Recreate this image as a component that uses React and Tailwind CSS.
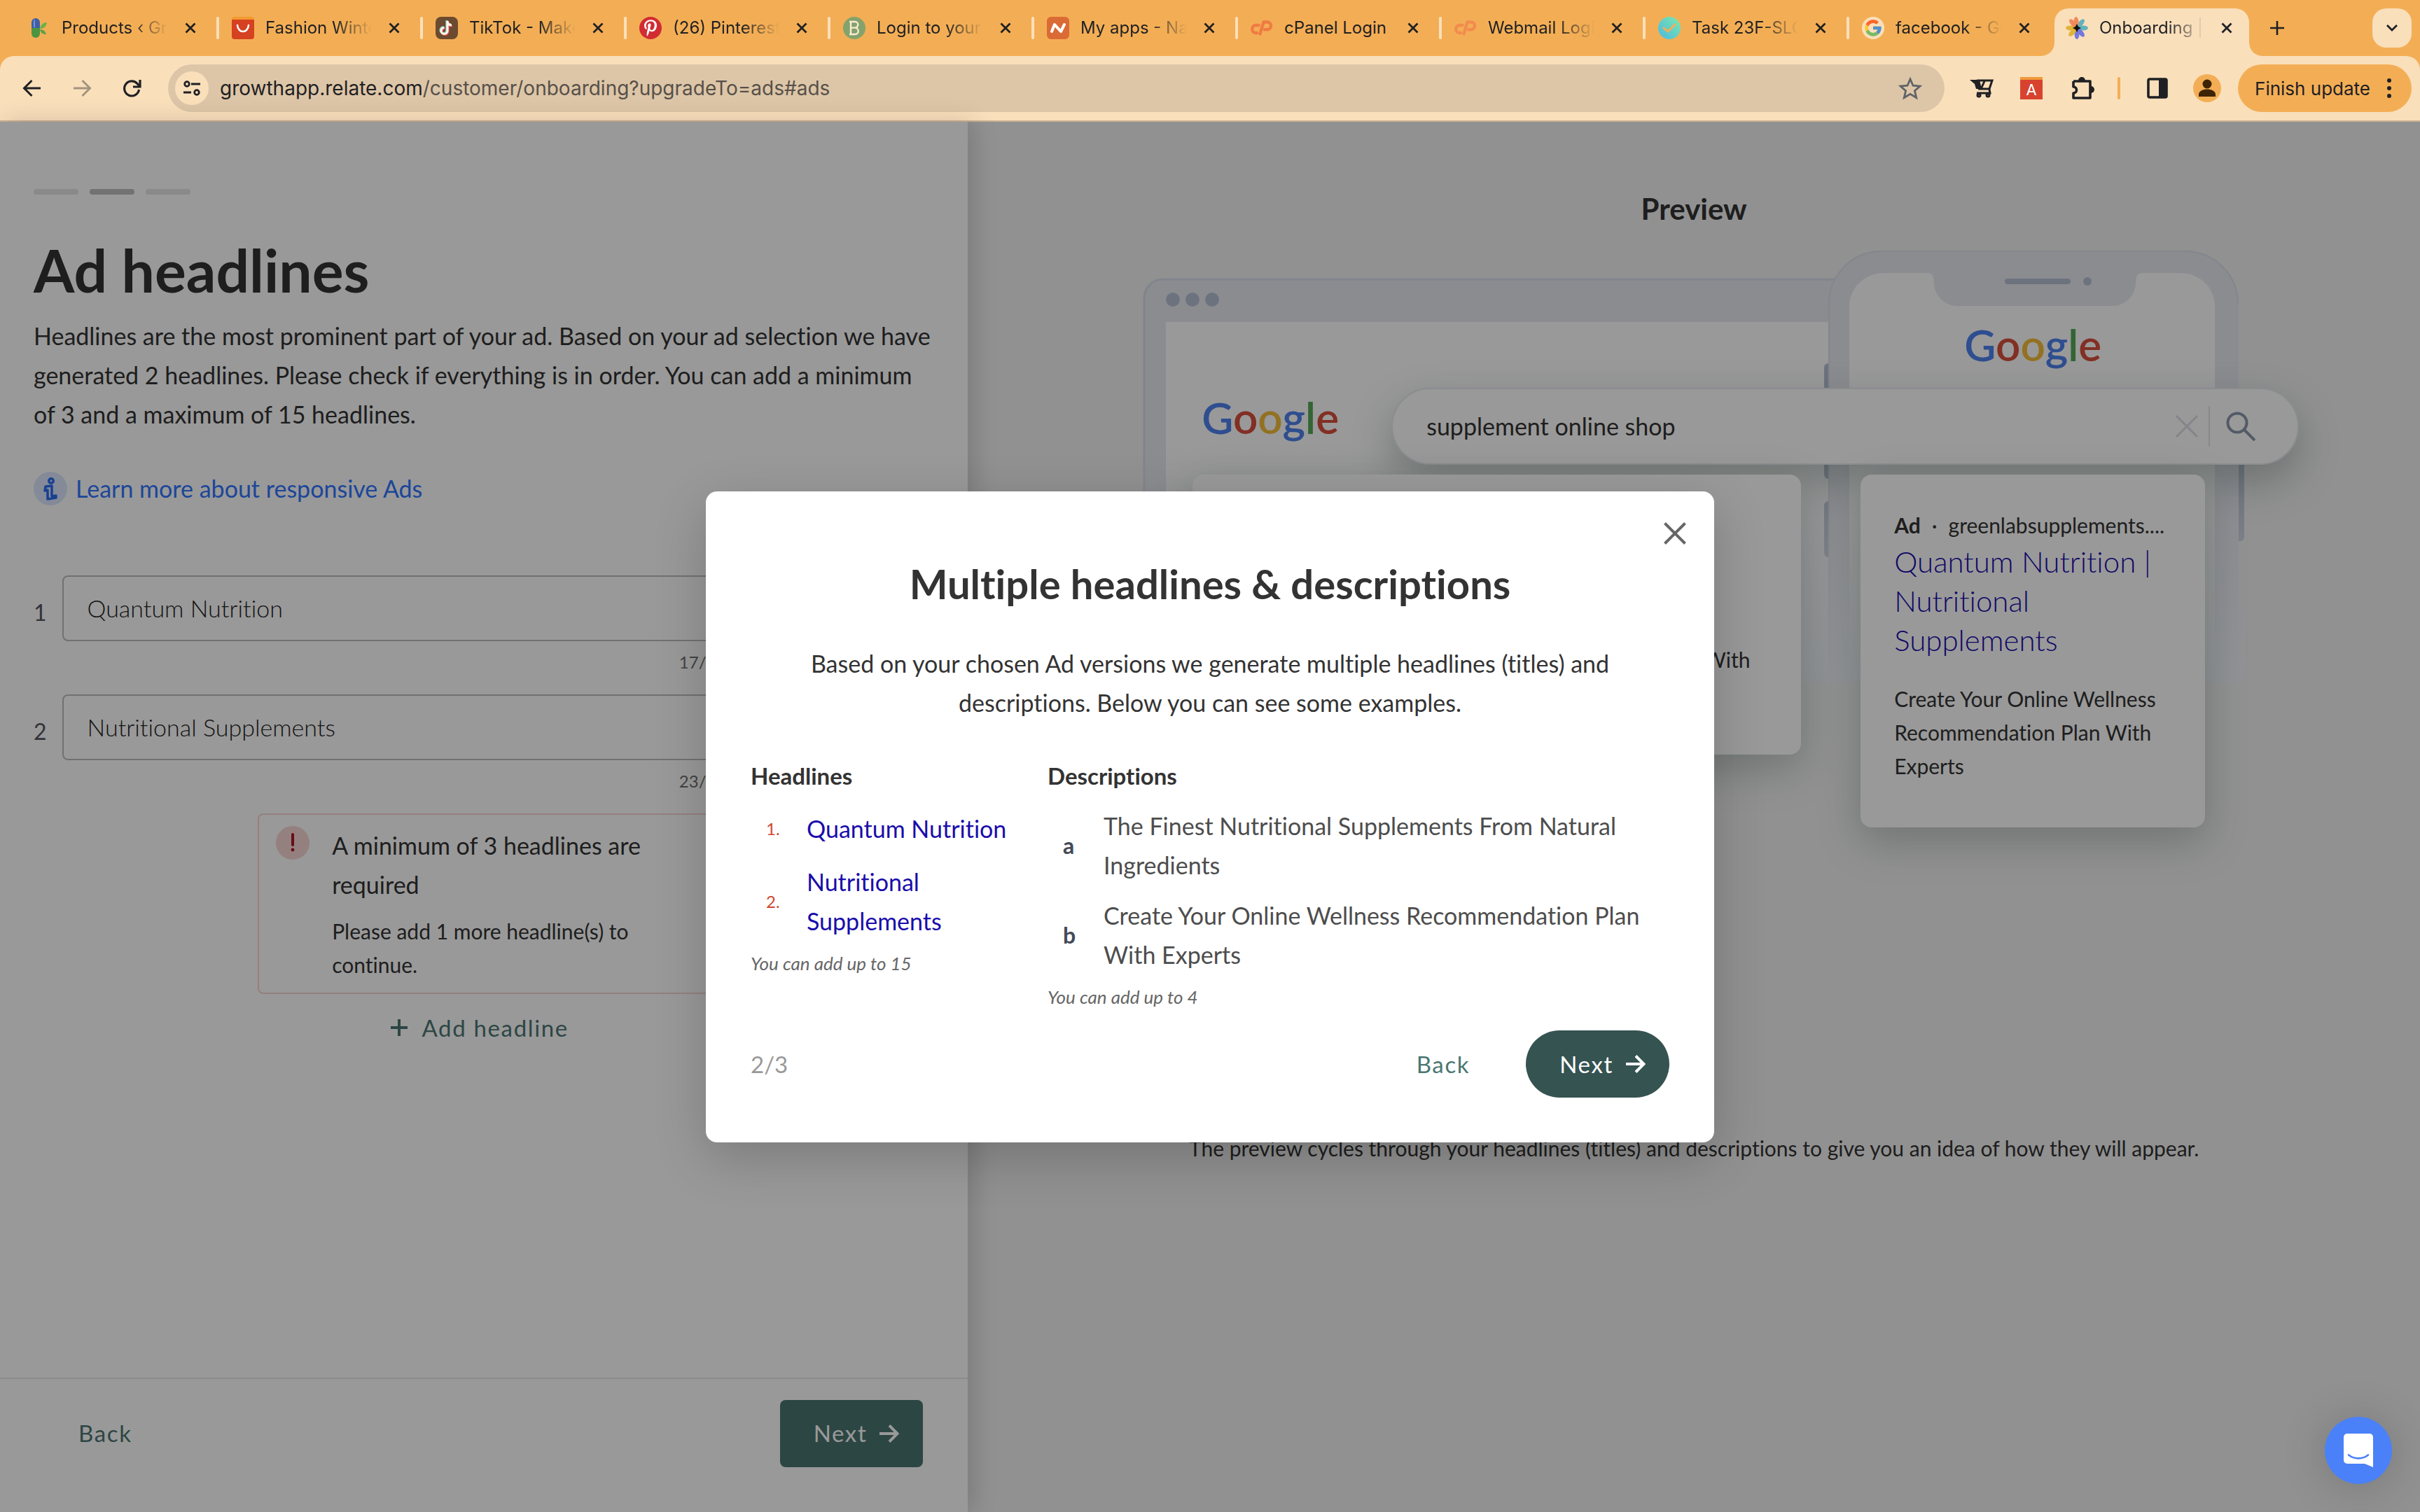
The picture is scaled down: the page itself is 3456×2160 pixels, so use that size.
import React from "react";
import { FcGoogle } from "react-icons/fc";
import { FaPinterestP } from "react-icons/fa";

const INK = "#1f2023";

function Products() {
  return (
    <svg viewBox="0 0 32 32" className="size-8">
      <path d="M5 8a6 6 0 0 1 12 0v8H5z" fill="#3d5fa8" />
      <path d="M5 16h12v8a6 6 0 0 1-12 0z" fill="#4b9440" />
      <path d="M8 7c0-2 1-3 2-3v11H8z" fill="#8fa9dc" opacity=".7" />
      <path d="M17 17c1-6 5-9 10-9-1 6-4 9-10 9z" fill="#6fb04a" />
      <path d="M17 18c5 0 8 3 9 7-5 0-8-2-9-7z" fill="#5aa04a" />
    </svg>
  );
}

function Ali() {
  return (
    <svg viewBox="0 0 32 32" className="size-8">
      <path d="M0 8V4a4 4 0 0 1 4-4h24a4 4 0 0 1 4 4v4z" fill="#f29a2e" />
      <path d="M0 4h32v24a4 4 0 0 1-4 4H4a4 4 0 0 1-4-4z" fill="#d64122" />
      <path d="M8 12c1 12 15 12 16 0" fill="none" stroke="#fff" strokeWidth="2.6" strokeLinecap="round" />
    </svg>
  );
}

function TikTok() {
  const note = "M17 6v14a4.5 4.5 0 1 1-4.5-4.5M17 6c0 4 3 6 6 6";
  return (
    <svg viewBox="0 0 32 32" className="size-8" fill="none" strokeWidth="3.2">
      <rect width="32" height="32" rx="8" fill="#6b4a2f" />
      <path d={note} stroke="#7fd6cd" transform="translate(-1 -1)" />
      <path d={note} stroke="#e8475b" transform="translate(1 1)" />
      <path d={note} stroke="#fff5e6" />
    </svg>
  );
}

function Pinterest() {
  return (
    <span className="grid size-8 place-items-center rounded-full bg-[#d22c33] text-white">
      <FaPinterestP className="size-6" />
    </span>
  );
}

function BLogo() {
  return (
    <svg viewBox="0 0 32 32" className="size-8" fill="none" stroke="#f9ecd2" strokeWidth="2.4" strokeLinejoin="round">
      <circle cx="16" cy="16" r="16" fill="#84a26c" stroke="none" />
      <path d="M11 7v18M9 7h8a4.3 4.3 0 0 1 0 8.6h-6M17 15.6a4.7 4.7 0 0 1 0 9.4H9" />
    </svg>
  );
}

function Namecheap() {
  return (
    <svg viewBox="0 0 32 32" className="size-8" fill="none" stroke="#fff" strokeWidth="4" strokeLinecap="round" strokeLinejoin="round">
      <rect width="32" height="32" rx="6" fill="#db6b35" stroke="none" />
      <path d="M7 21l4-10 9 10 5-10" />
    </svg>
  );
}

function CPanel({ faded }) {
  return (
    <svg
      viewBox="0 0 32 32"
      className={faded ? "size-8 text-[#f28c4e]" : "size-8 text-[#f07b42]"}
      fill="none"
      stroke="currentColor"
      strokeWidth="4.4"
      strokeLinecap="round"
      strokeLinejoin="round"
    >
      <path d="M11.500 12H8a5.500 5.500 0 0 0-.6 11h1.600" />
      <path d="M13.500 24.500L18.500 7.500h5.200a5.300 5.300 0 0 1 0 10.700h-3.600" />
    </svg>
  );
}

function Check() {
  return (
    <svg viewBox="0 0 32 32" className="size-8">
      <defs>
        <linearGradient id="mint" x1="0" y1="1" x2="1" y2="0">
          <stop offset="0" stopColor="#4cb8e0" />
          <stop offset="1" stopColor="#7de8ac" />
        </linearGradient>
      </defs>
      <circle cx="16" cy="16" r="16" fill="url(#mint)" />
      <path d="M8 16l6 5 10-10" fill="none" stroke="#f3ae55" strokeWidth="3" strokeLinecap="round" strokeLinejoin="round" />
    </svg>
  );
}

function GoogleTab() {
  return (
    <span className="grid size-8 place-items-center rounded-full bg-[#fadfbb]">
      <FcGoogle className="size-7 opacity-75" />
    </span>
  );
}

const PETALS = [
  [40, "#63b3bd"],
  [90, "#63b3bd"],
  [140, "#7478dc"],
  [180, "#7478dc"],
  [225, "#e0b437"],
  [270, "#e0b437"],
  [320, "#f08a5c"],
  [355, "#f08a5c"],
];

function Flower() {
  return (
    <svg viewBox="0 0 32 32" className="size-8">
      {PETALS.map(([a, c]) => (
        <ellipse key={a} cx="16" cy="7" rx="3.4" ry="7" fill={c} transform={`rotate(${a} 16 16)`} />
      ))}
      <path d="M16 10l2 4 4 2-4 2-2 4-2-4-4-2 4-2z" fill="#111" />
    </svg>
  );
}

function Cross({ className }) {
  return (
    <svg viewBox="0 0 16 16" className={className} fill="none" stroke="currentColor" strokeWidth="2.8">
      <path d="M1.5 1.5l13 13M14.5 1.5l-13 13" />
    </svg>
  );
}

const TABS = [
  ["Products ‹ Green", <Products />],
  ["Fashion Winter", <Ali />],
  ["TikTok - Make Y", <TikTok />],
  ["(26) Pinterest", <Pinterest />],
  ["Login to your a", <BLogo />],
  ["My apps - Nam", <Namecheap />],
  ["cPanel Login", <CPanel />, true],
  ["Webmail Login", <CPanel faded />],
  ["Task 23F-SLO", <Check />],
  ["facebook - Go", <GoogleTab />],
];

function TabLabel({ text, full }) {
  return (
    <span
      className={
        full
          ? "min-w-0 flex-1 whitespace-nowrap"
          : "min-w-0 flex-1 overflow-hidden whitespace-nowrap [mask-image:linear-gradient(to_right,black_65%,transparent)]"
      }
    >
      {text}
    </span>
  );
}

function Foot({ className }) {
  return (
    <svg viewBox="0 0 20 20" className={className}>
      <path d="M20 0v20H0C12 20 20 12 20 0z" fill="#fadfbb" />
    </svg>
  );
}

function TabStrip() {
  return (
    <div className="flex h-20 items-start bg-[#f3ae55] pr-3 pl-[22px] text-[24px] leading-8">
      {TABS.map(([text, icon, full], i) => (
        <div key={text} className="flex w-[291px] min-w-0 items-center pt-6">
          <button className="flex min-w-0 flex-1 items-center gap-4 pl-[18px] text-left">
            <span className="shrink-0">{icon}</span>
            <TabLabel text={text} full={full} />
          </button>
          <button aria-label={`Close ${text}`} className="mr-[29px] ml-6 shrink-0">
            <Cross className="size-4" />
          </button>
          <span className={i === TABS.length - 1 ? "w-1" : "h-8 w-1 rounded-full bg-[#fadfbb]"} />
        </div>
      ))}
      <div className="relative mt-3 ml-0.5 flex h-[68px] w-[278px] items-start rounded-t-[20px] bg-[#fadfbb] pt-3">
        <Foot className="absolute bottom-0 -left-5 size-5" />
        <Foot className="absolute -right-5 bottom-0 size-5 -scale-x-100" />
        <button className="flex min-w-0 flex-1 items-center gap-4 pl-4 text-left">
          <span className="shrink-0">
            <Flower />
          </span>
          <TabLabel text="Onboarding | R" />
        </button>
        <button aria-label="Close Onboarding" className="mt-2 mr-6 ml-6 shrink-0">
          <Cross className="size-4" />
        </button>
      </div>
      <button aria-label="New tab" className="mt-[30px] ml-[30px]">
        <svg viewBox="0 0 20 20" className="size-5" stroke={INK} strokeWidth="2.6">
          <path d="M10 0v20M0 10h20" />
        </svg>
      </button>
      <button aria-label="Search tabs" className="mt-3 ml-auto grid size-14 place-items-center rounded-[20px] bg-[#fadfbb]">
        <svg viewBox="0 0 16 10" className="h-[10px] w-4" fill="none" stroke={INK} strokeWidth="2.8">
          <path d="M1 1l7 7 7-7" />
        </svg>
      </button>
    </div>
  );
}

function Arrow({ className }) {
  return (
    <svg viewBox="0 0 28 28" className={className} fill="none" stroke="currentColor" strokeWidth="3">
      <path d="M2 14h23M14.5 3L25.5 14l-11 11" />
    </svg>
  );
}

function BoldArrow() {
  return (
    <svg viewBox="0 0 28 28" className="size-7" fill="none" stroke="currentColor" strokeWidth="4">
      <path d="M0 14h25M14 2.500L25.500 14 14 25.500" />
    </svg>
  );
}

function Toolbar() {
  return (
    <div className="bg-[#f3ae55]">
      <div className="flex h-[94px] items-center rounded-t-[20px] border-b-2 border-[#c9b091] bg-[#fadfbb] pr-3 pl-8">
        <button aria-label="Back" className="mr-[43px]">
          <Arrow className="size-7 -scale-x-100" />
        </button>
        <button aria-label="Forward" className="mr-[43px] text-[#a3947f]">
          <Arrow className="size-7" />
        </button>
        <button aria-label="Reload">
          <svg viewBox="0 0 28 28" className="size-7" fill="none" stroke={INK} strokeWidth="3.2">
            <path d="M24.500 16A10.500 10.500 0 1 1 22 7.500L25 10.500" />
            <path d="M26 2v10H16" />
          </svg>
        </button>
        <div className="ml-[38px] flex h-[68px] min-w-0 flex-1 items-center rounded-full bg-[#ddc6a7] pr-8 pl-[10px]">
          <button aria-label="View site information" className="grid size-12 shrink-0 place-items-center rounded-full bg-[#fadfbb]">
            <svg viewBox="0 0 24 22" className="h-[22px] w-6" fill="none" stroke={INK} strokeWidth="2.8">
              <circle cx="5" cy="5" r="3.3" />
              <path d="M11 5h13M0 17h11" />
              <circle cx="19" cy="17" r="3.3" />
            </svg>
          </button>
          <p className="ml-4 min-w-0 flex-1 text-[28px] leading-9 text-[#57504a]">
            <span className="text-[#1f2023]">growthapp.relate.com</span>/customer/onboarding?upgradeTo=ads#ads
          </p>
          <button aria-label="Bookmark this tab">
            <svg viewBox="0 0 34 34" className="size-[34px]" fill="none" stroke="#5f6368" strokeWidth="2.8">
              <path d="M17 4l4 9.2 10 .9-7.6 6.600 2.300 9.800L17 25.300l-8.700 5.200 2.300-9.800L3 14.100l10-.9z" />
            </svg>
          </button>
        </div>
        <button aria-label="Shopping extension" className="ml-9">
          <svg viewBox="0 0 34 28" className="h-7 w-[34px]" fill="none" stroke={INK} strokeWidth="3">
            <path d="M0 2h14l3 13H9L7 8z" fill={INK} stroke="none" />
            <path d="M10 3h22l-4 12H12M28 16l1 5H10M21 4l-5 11" />
            <circle cx="13" cy="24" r="2" />
            <circle cx="26" cy="24" r="2" />
          </svg>
        </button>
        <button aria-label="Ad extension" className="ml-[38px] h-8 w-8 border-t-4 border-[#ef9a3a] bg-[#d8432f] text-center text-[22px] leading-7 text-white">
          A
        </button>
        <button aria-label="Extensions" className="ml-[38px]">
          <svg viewBox="0 0 38 38" className="size-[38px]" fill={INK}>
            <path
              d="M6 9h24v24H6v-7c6 0 6-9 0-9V9"
              fill="none"
              stroke={INK}
              strokeWidth="3.6"
              strokeLinejoin="round"
            />
            <path d="M13 8a5 5 0 0 1 10 0zM31 16a5 5 0 0 1 0 10z" />
          </svg>
        </button>
        <span className="ml-[31px] h-8 w-1 rounded-full bg-[#f3ae55]" />
        <button aria-label="Side panel" className="ml-[38px]">
          <svg viewBox="0 0 30 30" className="size-[30px]">
            <rect x="2" y="2" width="26" height="26" rx="2" fill="none" stroke={INK} strokeWidth="3.6" />
            <path d="M17 1h12v28H17z" fill={INK} />
          </svg>
        </button>
        <button aria-label="Profile" className="ml-9">
          <svg viewBox="0 0 40 40" className="size-10">
            <circle cx="20" cy="20" r="20" fill="#f3ae55" />
            <circle cx="20" cy="14" r="6.5" fill="#3d2405" />
            <path d="M8 32v-3c0-5 6-7.500 12-7.500S32 24 32 29v3z" fill="#3d2405" />
          </svg>
        </button>
        <button className="ml-6 flex h-[68px] items-center gap-6 rounded-full bg-[#f3ae55] pr-[29px] pl-6 text-[26px]">
          Finish update
          <svg viewBox="0 0 6 30" className="h-[30px] w-[6px]" fill={INK}>
            <circle cx="3" cy="4" r="3" />
            <circle cx="3" cy="15" r="3" />
            <circle cx="3" cy="26" r="3" />
          </svg>
        </button>
      </div>
    </div>
  );
}

function HeadlineField({ n, value, used }) {
  const id = `headline-${n}`;
  return (
    <div className="flex h-[170px] items-start gap-[22px]">
      <label htmlFor={id} className="mt-[25px] text-[32px] leading-[56px] text-[#55555f]">
        {n}
      </label>
      <div className="min-w-0 flex-1">
        <input
          id={id}
          defaultValue={value}
          className="block h-[94px] w-full rounded-lg border-2 border-[#bdbdbd] px-[34px] pb-0.5 text-[34px] font-light text-[#222]"
        />
        <p className="mt-[10px] pr-4 text-right text-[24px] leading-10 text-[#6f6f6f]">{used}/30</p>
      </div>
    </div>
  );
}

function EditorPanel() {
  return (
    <section className="relative z-10 flex w-2/5 flex-col bg-white shadow-[8px_0_32px_rgba(0,0,0,0.16)]">
      <div className="flex-1 px-12 pt-24">
        <div className="flex gap-4">
          <span className="h-2 w-16 rounded-sm bg-[#e6e6e6]" />
          <span className="h-2 w-16 rounded-sm bg-[#bfbfbf]" />
          <span className="h-2 w-16 rounded-sm bg-[#e6e6e6]" />
        </div>
        <h1 className="mt-[60px] text-[84px] leading-[96px] font-bold">Ad headlines</h1>
        <p className="mt-[18px] text-[34px] leading-[56px]">
          Headlines are the most prominent part of your ad. Based on your ad selection we have generated 2 headlines.
          Please check if everything is in order. You can add a minimum of 3 and a maximum of 15 headlines.
        </p>
        <a href="#responsive" className="mt-[54px] flex items-center gap-3 text-[34px] leading-[46px] text-[#3076ff]">
          <svg viewBox="0 0 48 48" className="size-12">
            <circle cx="24" cy="24" r="24" fill="#dce7fc" />
            <g fill="none" stroke="#2b6df0" strokeWidth="3.5" strokeLinejoin="round">
              <circle cx="25" cy="13" r="3.2" />
              <path d="M17 21l9-1v15l6-1v3l-12 2v-13l-4 1z" />
            </g>
          </svg>
          Learn more about responsive Ads
        </a>
        <div className="mt-[100px] mr-[282px]">
          <HeadlineField n={1} value="Quantum Nutrition" used={17} />
          <HeadlineField n={2} value="Nutritional Supplements" used={23} />
        </div>
        <div className="mx-auto flex w-[646px] items-start gap-8 rounded-lg border-2 border-[#f8d4d2] px-6 py-4">
          <svg viewBox="0 0 48 48" className="size-12 shrink-0">
            <circle cx="24" cy="24" r="24" fill="#f9d5d5" />
            <path d="M24 12v15" stroke="#a81a24" strokeWidth="4" strokeLinecap="round" />
            <circle cx="24" cy="34" r="2.4" fill="#a81a24" />
          </svg>
          <div>
            <p className="text-[34px] leading-[56px]">A minimum of 3 headlines are required</p>
            <p className="mt-[14px] text-[30px] leading-[48px]">Please add 1 more headline(s) to continue.</p>
          </div>
        </div>
        <button className="mx-auto mt-5 flex items-center gap-5 pr-3 text-[33px] leading-[56px] tracking-wider text-[#4b7672]">
          <svg viewBox="0 0 24 24" className="size-6" stroke="currentColor" strokeWidth="4">
            <path d="M12 0v24M0 12h24" />
          </svg>
          Add headline
        </button>
      </div>
      <div className="flex items-center justify-between border-t-2 border-[#e8e8f0] pt-[30px] pr-16 pb-16 pl-[112px] text-[33px] tracking-wider">
        <button className="text-[#4b7672]">Back</button>
        <button className="flex h-24 items-center gap-[18px] rounded-lg bg-[#4a7571] pr-[34px] pl-12 text-white">
          Next <BoldArrow />
        </button>
      </div>
    </section>
  );
}

function GoogleLogo() {
  return (
    <span className="text-[62px] leading-[80px] font-semibold">
      <span className="text-[#4f82ee]">G</span>
      <span className="text-[#d94f3d]">o</span>
      <span className="text-[#f3bc3a]">o</span>
      <span className="text-[#4f82ee]">g</span>
      <span className="text-[#56a958]">l</span>
      <span className="text-[#d94f3d]">e</span>
    </span>
  );
}

function Devices() {
  return (
    <svg viewBox="0 0 1650 616" className="absolute top-0 left-0 h-[616px] w-[1650px]">
      <defs>
        <linearGradient id="fade" x1="0" y1="0" x2="0" y2="1">
          <stop offset="0.45" stopColor="#f1f3f8" stopOpacity="0" />
          <stop offset="1" stopColor="#f1f4f9" />
        </linearGradient>
      </defs>
      <path d="M78 616V68a28 28 0 0 1 28-28h1000v576z" fill="#e7e9f0" />
      <path d="M79 616V68a27 27 0 0 1 27-27h1000" fill="none" stroke="#d8dcea" strokeWidth="3" />
      <path d="M110 102h960v514H110z" fill="#fff" />
      <g fill="#b6c0d2">
        <circle cx="120" cy="70" r="10" />
        <circle cx="148" cy="70" r="10" />
        <circle cx="176" cy="70" r="10" />
        <rect x="1050" y="161" width="14" height="165" rx="6" />
        <rect x="1050" y="358" width="14" height="80" rx="6" />
        <rect x="1634" y="230" width="16" height="185" rx="6" />
      </g>
      <path d="M1056 616V76a76 76 0 0 1 76-76h434a76 76 0 0 1 76 76v540z" fill="#e7e9f0" />
      <path d="M1057 616V76a75 75 0 0 1 75-75h434a75 75 0 0 1 75 75" fill="none" stroke="#dcdfea" strokeWidth="2" />
      <path
        d="M1086 616V80a48 48 0 0 1 48-48h64c8 0 9 8 9 14a33 33 0 0 0 33 33h222a33 33 0 0 0 33-33c0-6 1-14 9-14h56a48 48 0 0 1 48 48v536z"
        fill="#fff"
      />
      <rect x="1308" y="40" width="94" height="8" rx="4" fill="#b6c0d2" />
      <circle cx="1426" cy="44" r="6" fill="#b6c0d2" />
      <path d="M78 0h1572v616H78z" fill="url(#fade)" />
    </svg>
  );
}

function AdCard({ wide }) {
  return (
    <article
      className={
        wide
          ? "w-[869px] rounded-2xl bg-white px-12 pt-12 pb-16 shadow-[0_20px_60px_rgba(20,50,40,0.25)]"
          : "w-[492px] rounded-2xl bg-white px-12 pt-12 pb-16 shadow-[0_20px_60px_rgba(20,50,40,0.25)]"
      }
    >
      <p className="flex gap-4 text-[30px] leading-[48px]">
        <b>Ad</b>
        <span>·</span>
        <span>{wide ? "greenlabsupplements.com" : "greenlabsupplements...."}</span>
      </p>
      <h3
        className={
          wide
            ? "pr-48 text-[42px] leading-[56px] font-light text-[#1a0dab]"
            : "text-[42px] leading-[56px] font-light text-[#1a0dab]"
        }
      >
        Quantum Nutrition | Nutritional Supplements
      </h3>
      <p className="mt-8 text-[30px] leading-[48px]">Create Your Online Wellness Recommendation Plan With Experts</p>
    </article>
  );
}

function PreviewPanel() {
  return (
    <section className="w-3/5 bg-[#f2f2f2] pt-24">
      <h2 className="text-center text-[42px] leading-[56px] font-bold">Preview</h2>
      <div className="relative mx-auto mt-8 w-[1728px]">
        <Devices />
        <div className="relative">
          <div className="flex justify-end pt-[94px] pr-[282px] pb-[22px]">
            <GoogleLogo />
          </div>
          <div className="flex items-start justify-between pl-[161px]">
            <div className="pt-0.5">
              <GoogleLogo />
            </div>
            <div className="flex h-[110px] w-[1296px] items-center rounded-full border-2 border-[#e7e9f0] bg-white pr-[60px] pl-12 shadow-[0_24px_60px_rgba(20,50,40,0.28)]">
              <input
                aria-label="Search query"
                defaultValue="supplement online shop"
                className="min-w-0 flex-1 text-[34px] leading-[56px]"
              />
              <svg viewBox="0 0 32 32" className="size-8" stroke="#dcdde6" strokeWidth="3">
                <path d="M1 1l30 30M31 1L1 31" />
              </svg>
              <span className="mx-[15px] h-[58px] w-[2px] bg-[#e2e3ea]" />
              <svg viewBox="0 0 42 42" className="ml-2 size-[42px]" fill="none" stroke="#8a96ac" strokeWidth="4">
                <circle cx="16" cy="16" r="13.5" />
                <path d="M25.500 25.500L41 41" />
              </svg>
            </div>
          </div>
          <div className="flex items-start gap-[85px] pt-[14px] pl-[148px]">
            <AdCard wide />
            <AdCard />
          </div>
        </div>
      </div>
      <p className="mt-[434px] text-center text-[30px] leading-[48px]">
        The preview cycles through your headlines (titles) and descriptions to give you an idea of how they will appear.
      </p>
    </section>
  );
}

const HEADLINES = ["Quantum Nutrition", "Nutritional Supplements"];
const DESCRIPTIONS = [
  ["a", "The Finest Nutritional Supplements From Natural Ingredients"],
  ["b", "Create Your Online Wellness Recommendation Plan With Experts"],
];

function Modal() {
  return (
    <div
      role="dialog"
      aria-labelledby="dialog-title"
      className="relative w-[1440px] rounded-2xl bg-white px-16 pt-24 pb-16 text-[34px] leading-[56px] shadow-[0_22px_76px_rgba(0,0,0,0.2)]"
    >
      <button aria-label="Close" className="absolute top-11 right-10 text-[#666]">
        <svg viewBox="0 0 32 32" className="size-8" stroke="currentColor" strokeWidth="4">
          <path d="M1.500 1.500l29 29M30.500 1.500l-29 29" />
        </svg>
      </button>
      <h2 id="dialog-title" className="text-center text-[58px] leading-[72px] font-bold">
        Multiple headlines &amp; descriptions
      </h2>
      <p className="mt-[50px] px-12 text-center">
        Based on your chosen Ad versions we generate multiple headlines (titles) and descriptions. Below you can see some
        examples.
      </p>
      <div className="mt-12 flex">
        <div className="w-[424px]">
          <h3 className="text-[33px] font-bold">Headlines</h3>
          <ol className="mt-5 flex flex-col gap-5">
            {HEADLINES.map((h, i) => (
              <li key={h} className="flex items-center text-[#1a0dab]">
                <span className="w-20 shrink-0 pl-[22px] text-[24px] text-[#d14732]">{i + 1}.</span>
                <span>{h}</span>
              </li>
            ))}
          </ol>
          <p className="mt-3 text-[26px] leading-10 text-[#666] italic">You can add up to 15</p>
        </div>
        <div className="min-w-0 flex-1">
          <h3 className="text-[33px] font-bold">Descriptions</h3>
          <ul className="mt-4 flex flex-col gap-4">
            {DESCRIPTIONS.map(([k, d]) => (
              <li key={k} className="flex items-center text-[#4d4d4d]">
                <b className="w-20 shrink-0 pl-[22px] text-[32px] text-[#434a57]">{k}</b>
                <span>{d}</span>
              </li>
            ))}
          </ul>
          <p className="mt-3 text-[26px] leading-10 text-[#666] italic">You can add up to 4</p>
        </div>
      </div>
      <div className="mt-7 flex items-center text-[33px]">
        <span className="flex-1 text-[#999]">2/3</span>
        <button className="mr-20 tracking-wider text-[#4b7672]">Back</button>
        <button className="flex h-24 items-center gap-[18px] rounded-full bg-[#355351] pr-[34px] pl-12 tracking-wider text-white">
          Next <BoldArrow />
        </button>
      </div>
    </div>
  );
}

export default function App() {
  return (
    <div className="flex min-h-screen flex-col overflow-hidden font-['Inter',sans-serif] text-[#1f2023]">
      <TabStrip />
      <Toolbar />
      <main className="relative flex flex-1 font-['Lato',sans-serif] text-[#333] [font-variant-ligatures:none]">
        <EditorPanel />
        <PreviewPanel />
        <div className="absolute inset-0 z-20 grid place-items-center bg-black/40">
          <Modal />
        </div>
        <button
          aria-label="Open chat"
          className="absolute right-10 bottom-10 z-30 grid size-24 place-items-center rounded-full bg-[#4a81f8] shadow-[0_4px_64px_rgba(0,0,0,0.18)]"
        >
          <svg viewBox="0 0 42 48" className="h-12 w-[42px]">
            <path d="M5 0h32a5 5 0 0 1 5 5v43l-12-5H5a5 5 0 0 1-5-5V5a5 5 0 0 1 5-5z" fill="#fff" />
            <path d="M7 30.500c8 6.500 20 6.500 28 0" fill="none" stroke="#4a81f8" strokeWidth="2.6" strokeLinecap="round" />
          </svg>
        </button>
      </main>
    </div>
  );
}
